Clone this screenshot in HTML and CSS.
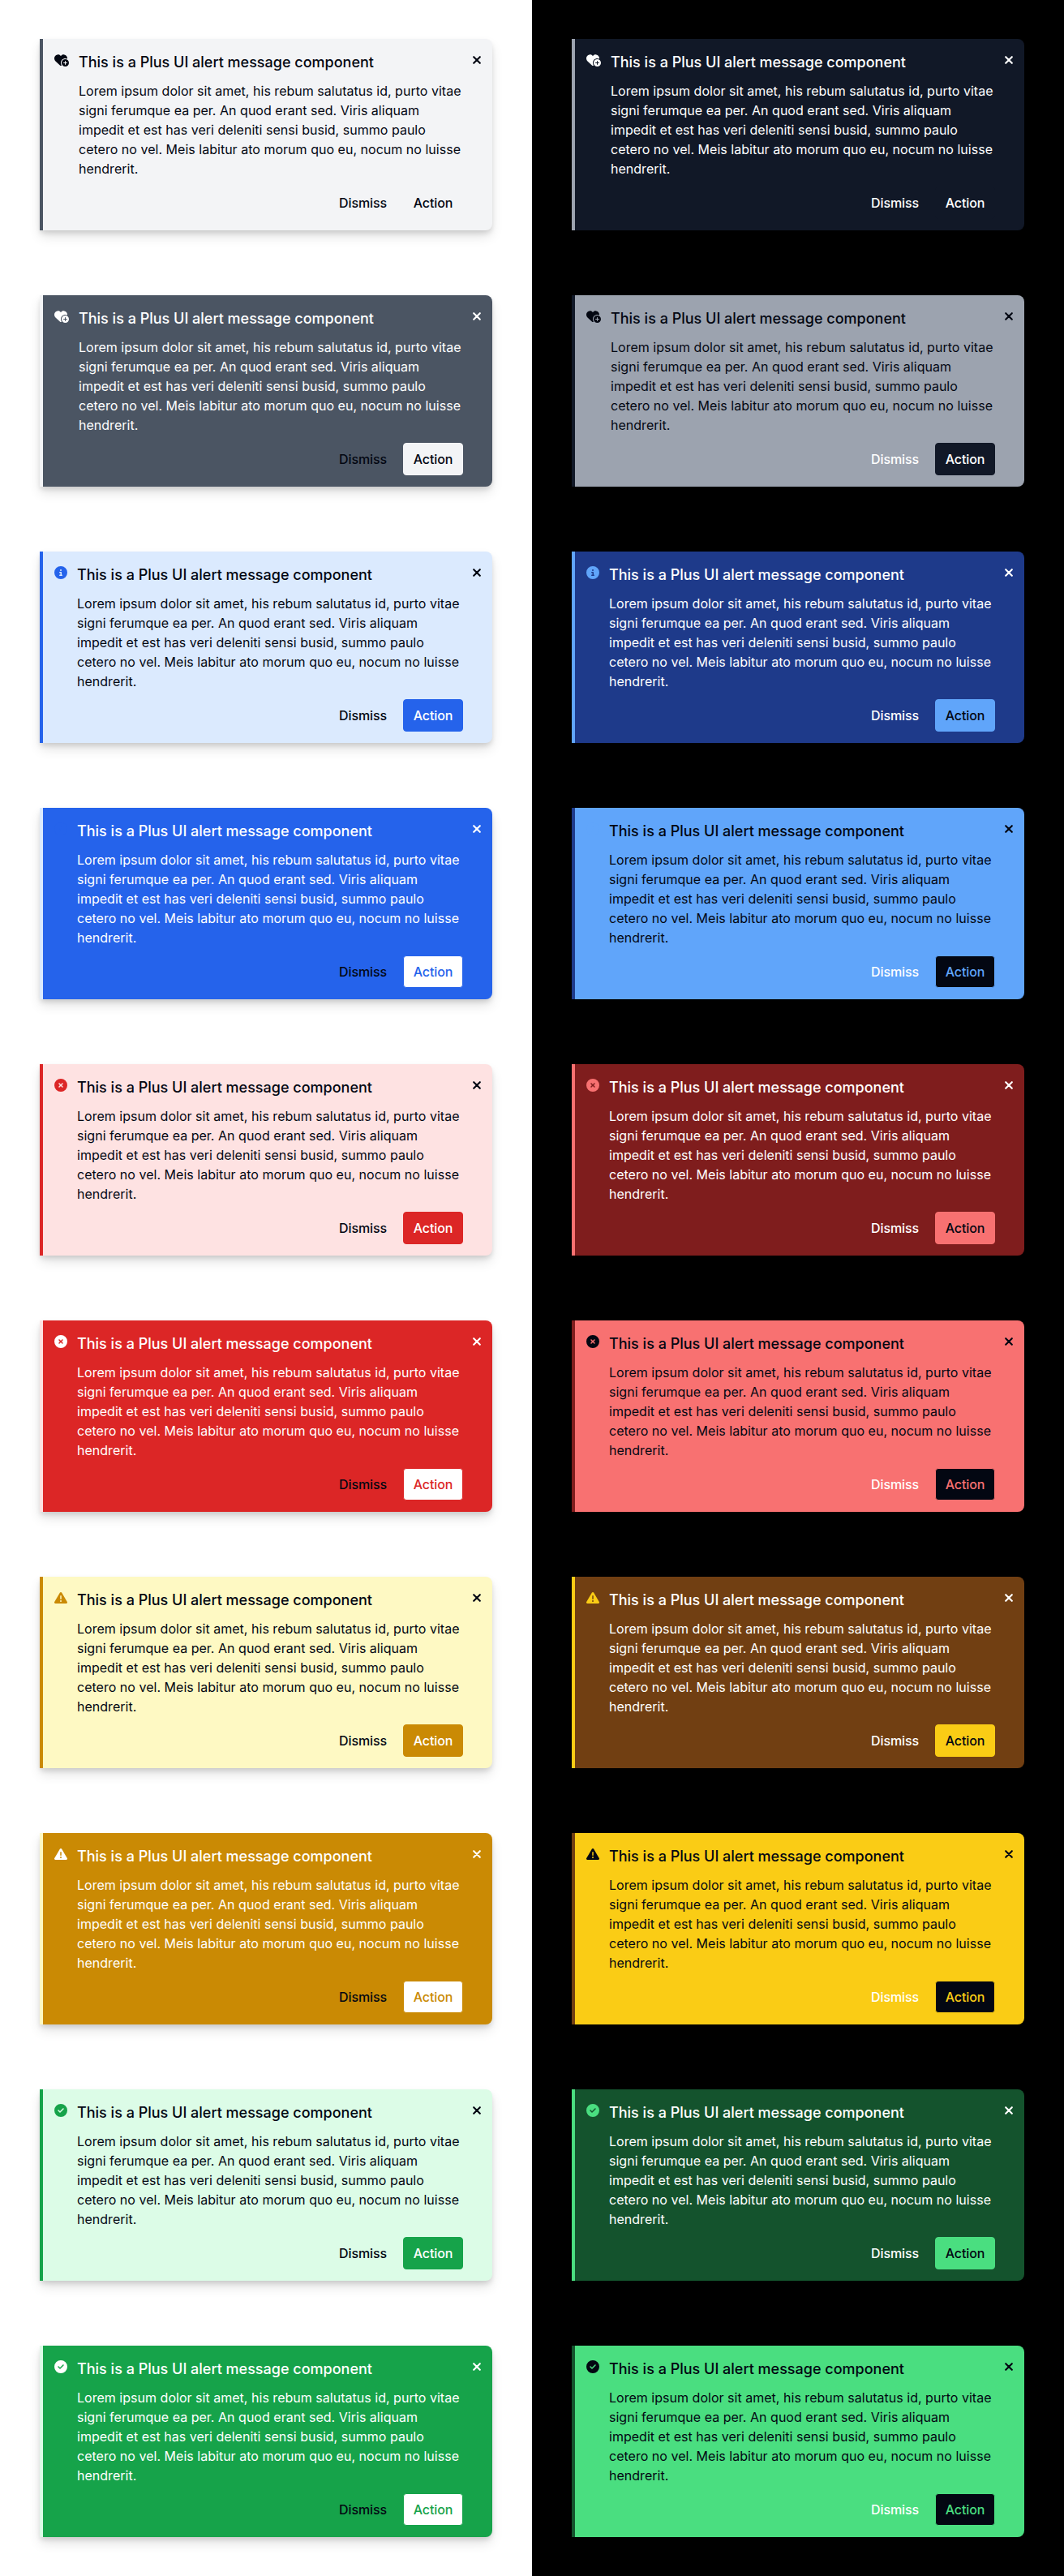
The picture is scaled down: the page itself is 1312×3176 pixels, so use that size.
FILE: index.html
```html
<!DOCTYPE html>
<html lang="en">
<head>
<meta charset="utf-8">
<title>Plus UI alerts</title>
<link rel="stylesheet" href="styles.css">
</head>
<body>
<svg class="sprite" aria-hidden="true">
  <symbol id="heart" viewBox="0 0 576 512"><path d="M47.6 300.4L228.300 469.100c7.500 7 17.400 10.900 27.700 10.900s20.200-3.900 27.700-10.900l2.600-2.400C267.200 438.600 256 404.600 256 368c0-97.200 78.800-176 176-176c28.300 0 55 6.700 78.700 18.500c.9-6.500 1.300-13 1.300-19.600v-5.800c0-69.900-50.500-129.500-119.400-141C347 36.500 300.600 51.400 268 84L256 96 244 84c-32.600-32.600-79-47.500-124.600-39.900C50.500 55.600 0 115.200 0 185.100v5.800c0 41.500 17.200 81.200 47.600 109.500zM432 512a144 144 0 1 0 0-288 144 144 0 1 0 0 288zm16-208v48h48c8.800 0 16 7.200 16 16s-7.200 16-16 16H448v48c0 8.800-7.200 16-16 16s-16-7.200-16-16V384H368c-8.800 0-16-7.200-16-16s7.200-16 16-16h48V304c0-8.800 7.200-16 16-16s16 7.200 16 16z"/></symbol>
  <symbol id="info" viewBox="0 0 512 512"><path d="M256 512A256 256 0 1 0 256 0a256 256 0 1 0 0 512zM216 336h24V272H216c-13.300 0-24-10.700-24-24s10.700-24 24-24h48c13.300 0 24 10.700 24 24v88h8c13.300 0 24 10.700 24 24s-10.700 24-24 24H216c-13.300 0-24-10.700-24-24s10.700-24 24-24zm40-208a32 32 0 1 1 0 64 32 32 0 1 1 0-64z"/></symbol>
  <symbol id="error" viewBox="0 0 512 512"><path d="M256 512A256 256 0 1 0 256 0a256 256 0 1 0 0 512zM175 175c9.400-9.400 24.600-9.400 33.900 0l47 47 47-47c9.400-9.400 24.600-9.400 33.900 0s9.400 24.600 0 33.900l-47 47 47 47c9.400 9.400 9.400 24.600 0 33.900s-24.600 9.400-33.900 0l-47-47-47 47c-9.400 9.400-24.600 9.400-33.900 0s-9.400-24.600 0-33.900l47-47-47-47c-9.400-9.400-9.400-24.600 0-33.900z"/></symbol>
  <symbol id="warning" viewBox="0 0 512 512"><path d="M256 32c14.200 0 27.300 7.500 34.500 19.800l216 368c7.300 12.400 7.300 27.700 .2 40.100S486.300 480 472 480H40c-14.300 0-27.600-7.700-34.700-20.100s-7-27.800 .2-40.100l216-368C228.700 39.500 241.800 32 256 32zm0 128c-13.300 0-24 10.700-24 24V296c0 13.300 10.700 24 24 24s24-10.700 24-24V184c0-13.300-10.700-24-24-24zm32 224a32 32 0 1 0 -64 0 32 32 0 1 0 64 0z"/></symbol>
  <symbol id="success" viewBox="0 0 512 512"><path d="M256 512A256 256 0 1 0 256 0a256 256 0 1 0 0 512zM369 209L241 337c-9.400 9.400-24.600 9.400-33.900 0l-64-64c-9.400-9.400-9.400-24.600 0-33.900s24.600-9.400 33.900 0l47 47L335 175c9.400-9.400 24.600-9.400 33.900 0s9.400 24.600 0 33.900z"/></symbol>
  <symbol id="close" viewBox="0 0 10 10"><path d="M1.200 1.200l7.600 7.600M8.800 1.200l-7.600 7.600" fill="none" stroke="currentColor" stroke-width="2.100" stroke-linecap="round"/></symbol>
</svg>
<main class="board">
  <section class="theme theme-light"></section>
  <section class="theme theme-dark"></section>
</main>
<script src="alerts.js"></script>
</body>
</html>
```
FILE: alerts.js
```js
const kinds = [
  ["neutral", "heart"],
  ["blue", "info"],
  ["red", "error"],
  ["yellow", "warning"],
  ["green", "success"],
];

const alertMarkup = (kind, icon, style) => `
  <article class="alert ${kind} ${style}">
    <svg class="alert-icon icon-${icon}"><use href="#${icon}"/></svg>
    <div class="alert-body">
      <h2 class="alert-title">This is a Plus UI alert message component</h2>
      <p class="alert-text">Lorem ipsum dolor sit amet, his rebum salutatus id, purto vitae signi ferumque ea per. An quod erant sed. Viris aliquam impedit et est has veri deleniti sensi busid, summo paulo cetero no vel. Meis labitur ato morum quo eu, nocum no luisse hendrerit.</p>
      <div class="alert-actions">
        <button class="btn btn-dismiss">Dismiss</button>
        <button class="btn btn-action">Action</button>
      </div>
    </div>
    <button class="alert-close" aria-label="Close"><svg><use href="#close"/></svg></button>
  </article>`;

document.querySelectorAll(".theme").forEach((theme) => {
  theme.innerHTML = kinds
    .map(([kind, icon]) => alertMarkup(kind, icon, "soft") + alertMarkup(kind, icon, "solid"))
    .join("");
});
```
FILE: styles.css
```css
* { box-sizing: border-box; }
body { margin: 0; font-family: Inter, "Liberation Sans", sans-serif; }
.sprite { display: none; }
.board { display: grid; grid-template-columns: 1fr 1fr; height: 3176px; }
.theme { display: flex; flex-direction: column; gap: 80px; padding: 48px 49px; overflow: hidden; }

.theme-light { --ink: #030712; --paper: #fff; --on-accent: #fff; background: #fff; }
.theme-dark { --ink: #fff; --paper: #030712; --on-accent: #030712; background: #000; }

.theme-light .neutral { --tint: #f3f4f6; --accent: #4b5563; }
.theme-light .blue { --tint: #dbeafe; --accent: #2563eb; }
.theme-light .red { --tint: #fee2e2; --accent: #dc2626; }
.theme-light .yellow { --tint: #fef9c3; --accent: #ca8a04; }
.theme-light .green { --tint: #dcfce7; --accent: #16a34a; }
.theme-dark .neutral { --tint: #111827; --accent: #9ca3af; }
.theme-dark .blue { --tint: #1e3a8a; --accent: #60a5fa; }
.theme-dark .red { --tint: #7f1d1d; --accent: #f87171; }
.theme-dark .yellow { --tint: #713f12; --accent: #facc15; }
.theme-dark .green { --tint: #14532d; --accent: #4ade80; }

.alert {
  display: flex;
  align-items: flex-start;
  flex: none;
  height: 236px;
  padding: 14px;
  border-left: 4px solid var(--accent);
  border-radius: 0 8px 8px 0;
  background: var(--tint);
  color: var(--ink);
  box-shadow: 0 8px 15px -1px rgb(0 0 0 / 0.12), 0 4px 6px -1px rgb(0 0 0 / 0.13);
}
.solid { border-color: var(--tint); background: var(--accent); color: var(--paper); }

.alert-icon { flex: none; width: 16px; height: 16px; margin: 4px 12px 0 0; fill: var(--accent); }
.icon-heart { width: 18px; }
.neutral .alert-icon, .solid .alert-icon { fill: currentColor; }
.blue.solid .alert-icon { fill: var(--accent); }

.alert-body { flex: 1; }
.alert-title { margin: 1px 0 9px; font-size: 18px; font-weight: 500; line-height: 28px; }
.alert-text { width: 475px; margin: 0 0 10px; font-size: 16px; line-height: 24px; letter-spacing: 0.02px; }
.alert-actions { display: flex; justify-content: flex-end; gap: 8px; margin-right: 12px; }

.btn { height: 40px; padding: 0 11px; border: 1px solid transparent; border-radius: 4px; background: none; color: var(--ink); font: 500 16px/24px Inter, "Liberation Sans", sans-serif; letter-spacing: -0.1px; }
.btn-action { width: 74px; border-color: var(--accent); background: var(--accent); color: var(--on-accent); }
.neutral .btn-action { border-color: var(--tint); background: var(--tint); color: var(--ink); }
.solid .btn-action { background: var(--paper); color: var(--accent); }
.neutral.solid .btn-action { background: var(--tint); color: var(--ink); }

.alert-close { flex: none; width: 10px; height: 10px; margin-top: 7px; padding: 0; border: 0; background: none; color: inherit; }
.alert-close svg { display: block; width: 10px; height: 10px; }
```
